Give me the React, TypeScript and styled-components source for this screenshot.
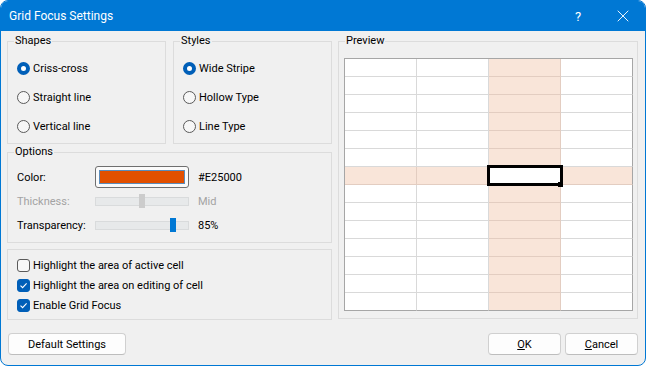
import React from 'react';
import styled, { createGlobalStyle } from 'styled-components';
import { X } from 'lucide-react';

const GlobalStyle = createGlobalStyle`
    html, body {
        margin: 0;
        padding: 0;
        background: #ffffff;
    }
    body {
        font-family: Roboto, "Noto Sans", sans-serif;
        font-size: 11px;
        color: #000000;
    }
`;

const ROWS = 14;
const COLS = 4;
const ACTIVE_ROW = 6;
const ACTIVE_COL = 2;

const Radio: React.FC<{ label: string; checked?: boolean }> = ({ label, checked = false }) => (
    <OptionRow>
        <RadioDot $checked={checked} />
        {label}
    </OptionRow>
);

const Check: React.FC<{ label: string; checked?: boolean }> = ({ label, checked = false }) => (
    <CheckRow>
        <CheckBox $checked={checked}>
            {checked && (
                <svg width="9" height="9" viewBox="0 0 9 9">
                    <path d="M1.5 4.6 L3.6 6.6 L7.6 2.4" fill="none" stroke="#ffffff" strokeWidth="1.1" />
                </svg>
            )}
        </CheckBox>
        {label}
    </CheckRow>
);

const Slider: React.FC<{ value: number; disabled?: boolean }> = ({ value, disabled = false }) => (
    <SliderWrap>
        <Track />
        <Thumb $disabled={disabled} style={{ left: Math.round(value * 88) }} />
    </SliderWrap>
);

const App: React.FC = () => (
    <>
        <GlobalStyle />
        <Window>
            <TitleBar>
                <Title>Grid Focus Settings</Title>
                <CaptionButton $width={46}>?</CaptionButton>
                <CaptionButton $width={44}>
                    <X size={20} strokeWidth={1.1} color="#ffffff" />
                </CaptionButton>
            </TitleBar>

            <Body>
                <LeftColumn>
                    <TopRow>
                        <Group $height={103}>
                            <Legend>Shapes</Legend>
                            <RadioList>
                                <Radio label="Criss-cross" checked />
                                <Radio label="Straight line" />
                                <Radio label="Vertical line" />
                            </RadioList>
                        </Group>
                        <Group $height={103}>
                            <Legend>Styles</Legend>
                            <RadioList>
                                <Radio label="Wide Stripe" checked />
                                <Radio label="Hollow Type" />
                                <Radio label="Line Type" />
                            </RadioList>
                        </Group>
                    </TopRow>

                    <Group $height={91} $top={8}>
                        <Legend>Options</Legend>
                        <OptionsGrid>
                            <FieldLabel>Color:</FieldLabel>
                            <ColorButton>
                                <Swatch />
                            </ColorButton>
                            <FieldLabel>#E25000</FieldLabel>

                            <FieldLabel $disabled>Thickness:</FieldLabel>
                            <Slider value={0.5} disabled />
                            <FieldLabel $disabled>Mid</FieldLabel>

                            <FieldLabel>Transparency:</FieldLabel>
                            <Slider value={0.85} />
                            <FieldLabel>85%</FieldLabel>
                        </OptionsGrid>
                    </Group>

                    <Group $height={71} $top={6}>
                        <CheckList>
                            <Check label="Highlight the area of active cell" />
                            <Check label="Highlight the area on editing of cell" checked />
                            <Check label="Enable Grid Focus" checked />
                        </CheckList>
                    </Group>
                </LeftColumn>

                <Group $height={278}>
                    <Legend>Preview</Legend>
                    <PreviewArea>
                        <SheetGrid>
                            {Array.from({ length: ROWS * COLS }).map((_, i) => {
                                const r = Math.floor(i / COLS);
                                const c = i % COLS;
                                return (
                                    <Cell
                                        key={i}
                                        $hl={r === ACTIVE_ROW || c === ACTIVE_COL}
                                        $lastCol={c === COLS - 1}
                                        $lastRow={r === ROWS - 1}
                                    />
                                );
                            })}
                            <ActiveCell />
                            <FillHandle />
                        </SheetGrid>
                    </PreviewArea>
                </Group>
            </Body>

            <Footer>
                <PushButton $width={118}>Default Settings</PushButton>
                <ButtonGroup>
                    <PushButton $width={73}><u>O</u>K</PushButton>
                    <PushButton $width={73}><u>C</u>ancel</PushButton>
                </ButtonGroup>
            </Footer>
        </Window>
    </>
);
export default App;

const Window = styled.div`
    width: 646px;
    height: 366px;
    box-sizing: border-box;
    display: flex;
    flex-direction: column;
    background: #f0f0f0;
    border: 1px solid #0078d4;
    border-radius: 8px;
    overflow: hidden;
`;

const TitleBar = styled.div`
    display: flex;
    align-items: center;
    height: 30px;
    padding-left: 8px;
    background: #0078d4;
    color: #ffffff;
`;

const Title = styled.div`
    flex: 1;
    font-size: 12px;
`;

const CaptionButton = styled.div<{ $width: number }>`
    display: flex;
    align-items: center;
    justify-content: center;
    width: ${p => p.$width}px;
    height: 30px;
    font-size: 13px;
`;

const Body = styled.div`
    display: grid;
    grid-template-columns: 325px 300px;
    column-gap: 6px;
    padding: 10px 0 0 6px;
`;

const LeftColumn = styled.div`
    display: flex;
    flex-direction: column;
`;

const TopRow = styled.div`
    display: grid;
    grid-template-columns: 159px 159px;
    column-gap: 7px;
`;

const Group = styled.div<{ $height: number; $top?: number }>`
    position: relative;
    box-sizing: border-box;
    height: ${p => p.$height}px;
    margin-top: ${p => p.$top ?? 0}px;
    border: 1px solid #dcdcdc;
`;

const Legend = styled.span`
    position: absolute;
    top: -9px;
    left: 6px;
    padding: 0 1px;
    line-height: 16px;
    background: #f0f0f0;
`;

const RadioList = styled.div`
    display: flex;
    flex-direction: column;
    gap: 11px;
    padding: 17px 0 0 9px;
`;

const OptionRow = styled.div`
    display: flex;
    align-items: center;
    height: 18px;
`;

const RadioDot = styled.span<{ $checked: boolean }>`
    box-sizing: border-box;
    width: 13px;
    height: 13px;
    margin-right: 3px;
    border-radius: 50%;
    border: ${p => (p.$checked ? '4px solid #005fb8' : '1px solid #5a5a5a')};
    background: ${p => (p.$checked ? '#ffffff' : '#f7f7f7')};
`;

const OptionsGrid = styled.div`
    display: grid;
    grid-template-columns: 69px 94px auto;
    grid-auto-rows: 22px;
    column-gap: 9px;
    row-gap: 2px;
    align-items: center;
    padding: 13px 0 0 9px;
`;

const FieldLabel = styled.span<{ $disabled?: boolean }>`
    white-space: nowrap;
    color: ${p => (p.$disabled ? '#a3a3a3' : '#000000')};
`;

const ColorButton = styled.div`
    box-sizing: border-box;
    height: 22px;
    padding: 3px;
    border: 1px solid #6f6f6f;
    border-radius: 3px;
    background: #fbfbfb;
`;

const Swatch = styled.div`
    height: 100%;
    box-sizing: border-box;
    border: 1px solid #5b8cbb;
    background: #e25000;
`;

const SliderWrap = styled.div`
    position: relative;
    display: flex;
    align-items: center;
    height: 22px;
`;

const Track = styled.div`
    flex: 1;
    height: 9px;
    box-sizing: border-box;
    border: 1px solid #d9dbdc;
    background: #e7e9ea;
`;

const Thumb = styled.div<{ $disabled: boolean }>`
    position: absolute;
    top: 4px;
    width: 6px;
    height: 14px;
    background: ${p => (p.$disabled ? '#cccccc' : '#0078d4')};
`;

const CheckList = styled.div`
    display: flex;
    flex-direction: column;
    padding: 5px 0 0 9px;
`;

const CheckRow = styled.div`
    display: flex;
    align-items: center;
    height: 20px;
`;

const CheckBox = styled.span<{ $checked: boolean }>`
    box-sizing: border-box;
    display: flex;
    align-items: center;
    justify-content: center;
    width: 13px;
    height: 13px;
    margin-right: 3px;
    border-radius: 3px;
    border: 1px solid ${p => (p.$checked ? '#005fb8' : '#5a5a5a')};
    background: ${p => (p.$checked ? '#005fb8' : '#f7f7f7')};
`;

const PreviewArea = styled.div`
    padding: 16px 0 0 5px;
`;

const SheetGrid = styled.div`
    position: relative;
    display: grid;
    grid-template-columns: repeat(4, 72px);
    grid-auto-rows: 18px;
    width: fit-content;
    border-left: 1px solid #a6a6a6;
    border-top: 1px solid #a6a6a6;
    background: #ffffff;
`;

const Cell = styled.div<{ $hl: boolean; $lastCol: boolean; $lastRow: boolean }>`
    box-sizing: border-box;
    background: ${p => (p.$hl ? '#f9e5d9' : '#ffffff')};
    border-right: 1px solid ${p => (p.$lastCol ? '#a6a6a6' : p.$hl ? '#e3cdc1' : '#d9d9d9')};
    border-bottom: 1px solid ${p => (p.$lastRow ? '#a6a6a6' : p.$hl ? '#e3cdc1' : '#d9d9d9')};
`;

const ActiveCell = styled.div`
    position: absolute;
    left: 142px;
    top: 106px;
    width: 76px;
    height: 21px;
    box-sizing: border-box;
    border: 3px solid #000000;
    background: #ffffff;
`;

const FillHandle = styled.div`
    position: absolute;
    left: 213px;
    top: 123px;
    width: 5px;
    height: 5px;
    background: #000000;
`;

const Footer = styled.div`
    display: flex;
    justify-content: space-between;
    margin-top: 13px;
    padding: 0 7px;
`;

const ButtonGroup = styled.div`
    display: flex;
    gap: 4px;
`;

const PushButton = styled.div<{ $width: number }>`
    display: flex;
    align-items: center;
    justify-content: center;
    box-sizing: border-box;
    width: ${p => p.$width}px;
    height: 22px;
    border: 1px solid #d0d0d0;
    border-bottom-color: #bdbdbd;
    border-radius: 4px;
    background: #fdfdfd;
`;
